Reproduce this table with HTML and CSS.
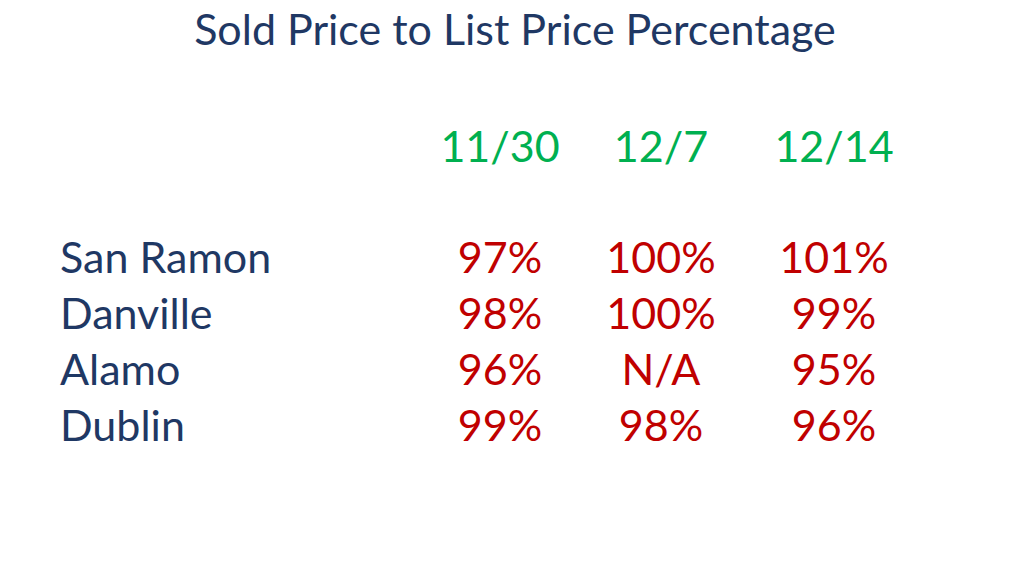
FILE: index.html
```html
<!DOCTYPE html>
<html>
<head>
<meta charset="utf-8">
<link rel="stylesheet" href="styles.css">
</head>
<body>
<div class="slide">
  <h1 class="title">Sold Price to List Price Percentage</h1>
  <div class="table">
    <div class="head-row">
      <span class="label"></span>
      <span class="date">11/30</span>
      <span class="date">12/7</span>
      <span class="date">12/14</span>
    </div>
    <div class="row">
      <span class="label">San Ramon</span>
      <span class="val">97%</span>
      <span class="val">100%</span>
      <span class="val">101%</span>
    </div>
    <div class="row">
      <span class="label">Danville</span>
      <span class="val">98%</span>
      <span class="val">100%</span>
      <span class="val">99%</span>
    </div>
    <div class="row">
      <span class="label">Alamo</span>
      <span class="val">96%</span>
      <span class="val">N/A</span>
      <span class="val">95%</span>
    </div>
    <div class="row">
      <span class="label">Dublin</span>
      <span class="val">99%</span>
      <span class="val">98%</span>
      <span class="val">96%</span>
    </div>
  </div>
</div>
</body>
</html>
```
FILE: styles.css
```css
html, body {
  margin: 0;
  padding: 0;
  background: #ffffff;
}
.slide {
  width: 1024px;
  height: 576px;
  overflow: hidden;
  font-family: "Lato", "Open Sans", sans-serif;
}
.title {
  margin: 0;
  padding-top: 1px;
  font-weight: 400;
  font-size: 43px;
  line-height: 56px;
  text-align: center;
  color: #1f3864;
  padding-left: 6px;
}
.table {
  padding-left: 60px;
  padding-top: 61px;
}
.head-row, .row {
  display: grid;
  grid-template-columns: 360px 160px 162px 184px;
  font-size: 43px;
  line-height: 56px;
}
.head-row {
  margin-bottom: 55px;
}
.label {
  color: #1f3864;
}
.date {
  color: #00b050;
  text-align: center;
}
.val {
  color: #c00000;
  text-align: center;
}
```
